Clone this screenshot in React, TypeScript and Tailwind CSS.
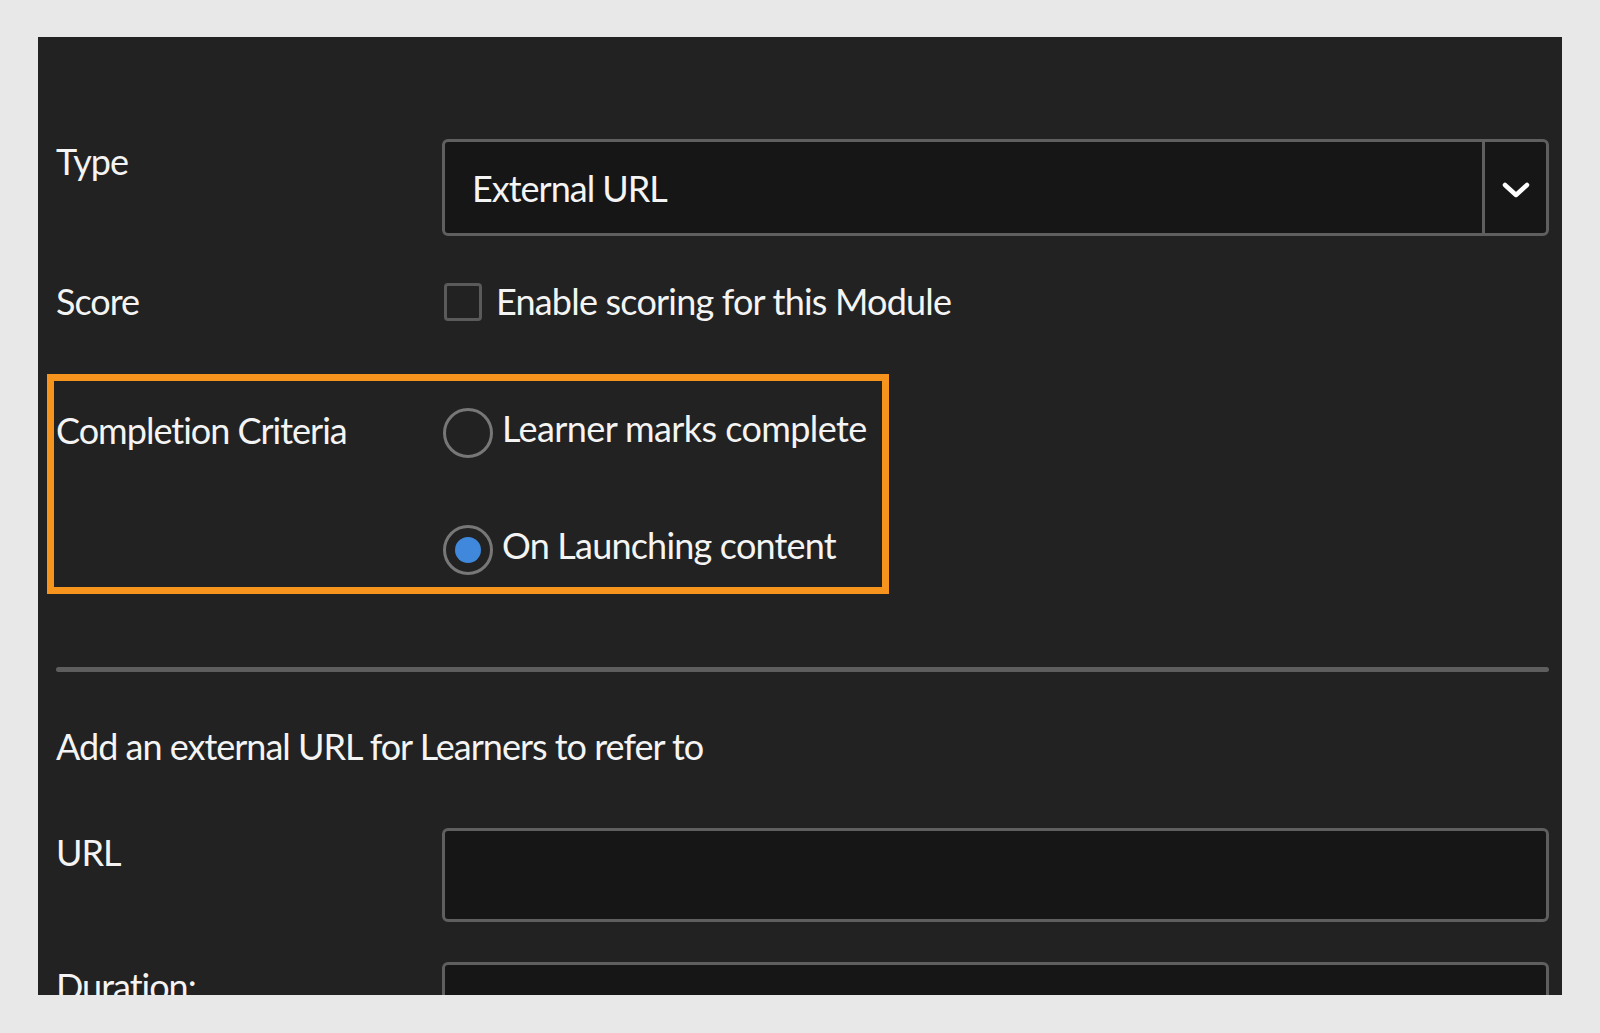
import React from "react";

function Label({ children, className = "" }: { children: React.ReactNode; className?: string }) {
  return (
    <div className={`w-[386px] shrink-0 pt-[4px] text-[36px] leading-[43px] tracking-[-1px] ${className}`}>
      {children}
    </div>
  );
}

function Radio({ checked }: { checked?: boolean }) {
  return (
    <div className="mt-[5px] ml-[1px] flex h-[50px] w-[50px] shrink-0 items-center justify-center rounded-full border-[3px] border-[#777777]">
      {checked && <div className="h-[26px] w-[26px] rounded-full bg-[#3f88dc]" />}
    </div>
  );
}

export default function App() {
  return (
    <div className="min-h-screen bg-[#e8e8e8] pl-[38px] pt-[37px] font-[Lato,sans-serif] text-[#f4f4f4]">
      <div className="h-[958px] w-[1524px] overflow-hidden bg-[#222222] pl-[18px] pr-[13px] pt-[99px]">
        {/* Type */}
        <div className="flex items-start">
          <Label>Type</Label>
          <div className="mt-[3px] flex h-[97px] flex-1 rounded-[6px] border-[3px] border-[#5f5f5f] bg-[#161616]">
            <div className="flex flex-1 items-center pl-[27px] text-[36px] tracking-[-1px]">External URL</div>
            <div className="flex w-[64px] items-center justify-center border-l-[3px] border-[#5f5f5f]">
              <svg className="mt-[4px]" width="28" height="16" viewBox="0 0 28 16" fill="none">
                <path d="M3 3 L14 13 L25 3" stroke="#ffffff" strokeWidth="4.5" strokeLinecap="round" strokeLinejoin="round" />
              </svg>
            </div>
          </div>
        </div>

        {/* Score */}
        <div className="mt-[40px] flex items-start">
          <Label>Score</Label>
          <div className="mt-[7px] ml-[2px] h-[38px] w-[38px] shrink-0 rounded-[4px] border-[3px] border-[#5a5a5a]" />
          <div className="ml-[14px] pt-[4px] text-[36px] leading-[43px] tracking-[-0.8px]">Enable scoring for this Module</div>
        </div>

        {/* Completion Criteria */}
        <div className="relative mt-[80px] flex items-start">
          <div className="pointer-events-none absolute left-[-9px] top-[-29px] h-[220px] w-[842px] border-[7px] border-[#f7941d]" />
          <Label className="mt-[2px]">Completion Criteria</Label>
          <div className="flex flex-col gap-[62px]">
            <div className="flex items-start">
              <Radio />
              <div className="ml-[9px] pt-[4px] text-[36px] leading-[43px] tracking-[-0.6px]">Learner marks complete</div>
            </div>
            <div className="flex items-start">
              <Radio checked />
              <div className="ml-[9px] pt-[4px] text-[36px] leading-[43px] tracking-[-0.8px]">On Launching content</div>
            </div>
          </div>
        </div>

        <div className="mt-[92px] h-[5px] rounded-full bg-[#5e5e5e]" />

        <div className="mt-[49px] pt-[4px] text-[36px] leading-[43px] tracking-[-1px]">
          Add an external URL for Learners to refer to
        </div>

        {/* URL */}
        <div className="mt-[59px] flex items-start">
          <Label>URL</Label>
          <div className="mt-[1px] h-[94px] flex-1 rounded-[6px] border-[3px] border-[#5f5f5f] bg-[#161616]" />
        </div>

        {/* Duration */}
        <div className="mt-[39px] flex items-start">
          <Label>Duration:</Label>
          <div className="mt-[1px] h-[94px] flex-1 rounded-[6px] border-[3px] border-[#5f5f5f] bg-[#161616]" />
        </div>
      </div>
    </div>
  );
}
